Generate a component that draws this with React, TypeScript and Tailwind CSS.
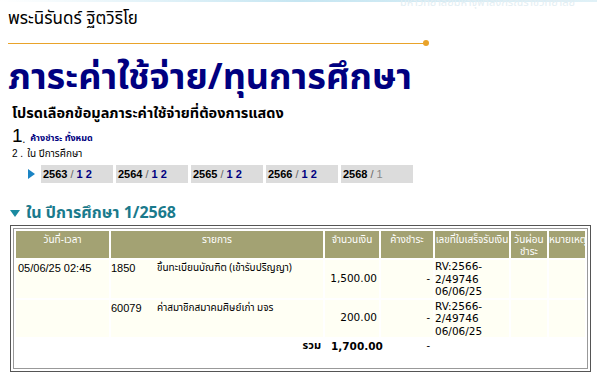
import React from "react";

const years = [
    { year: "2563", terms: "1 2", active: true },
    { year: "2564", terms: "1 2" },
    { year: "2565", terms: "1 2" },
    { year: "2566", terms: "1 2" },
    { year: "2568", terms: "1", muted: true },
];

const rows = [
    {
        date: "05/06/25 02:45",
        code: "1850",
        item: "ขึ้นทะเบียนบัณฑิต (เข้ารับปริญญา)",
        amount: "1,500.00",
        receipt: ["RV:2566-", "2/49746", "06/06/25"],
    },
    {
        date: "",
        code: "60079",
        item: "ค่าสมาชิกสมาคมศิษย์เก่า มจร",
        amount: "200.00",
        receipt: ["RV:2566-", "2/49746", "06/06/25"],
    },
];

const thai = "font-['Tahoma','Noto_Sans_Thai','Noto_Sans','DejaVu_Sans',sans-serif]";

export default function App() {
    return (
        <div className={`relative h-[373px] w-[597px] overflow-hidden bg-white ${thai}`}>
            {/* faded banner strip at the top */}
            <div className="h-[2px] w-full bg-gradient-to-r from-white via-[#c6e6f2] to-[#e0f1f7]" />
            <div className="absolute right-[22px] top-[-2px] text-[11px] leading-[9px] text-[#e3eef3]">มหาวิทยาลัยมหาจุฬาลงกรณราชวิทยาลัย</div>

            <div className="px-2 pt-[6px] text-[17px] leading-[22px] text-black">พระนิรันดร์ ฐิตวิริโย</div>

            <div className="mt-[10px] flex items-center pl-2">
                <div className="h-[1px] w-[416px] bg-[#e9a32a]" />
                <div className="-ml-[1px] h-[6px] w-[6px] rounded-full bg-[#e9a32a]" />
            </div>

            <h1 className="mt-[8px] pl-2 text-[36px] font-bold leading-[48px] text-[#000080]">ภาระค่าใช้จ่าย/ทุนการศึกษา</h1>

            <div className="mt-[2px] pl-3 text-[14.5px] font-bold leading-[20px] text-black">โปรดเลือกข้อมูลภาระค่าใช้จ่ายที่ต้องการแสดง</div>

            <div className="mt-[2px] flex items-end pl-3 leading-none">
                <span className="font-['Liberation_Sans',sans-serif] text-[19px]">1</span>
                <span className="mr-[5px] text-[10px]">.</span>
                <span className="mb-[2px] text-[9px] font-bold text-[#000080]">ค้างชำระ ทั้งหมด</span>
            </div>

            <div className="mt-[3px] flex items-center pl-3 text-[10px] leading-[12px]">
                <span className="font-['Liberation_Sans',sans-serif]">2 .</span>
                <span className="ml-[4px]">ใน ปีการศึกษา</span>
            </div>

            <div className="mt-[5px] flex items-center gap-[3px] pl-[28px]">
                <svg width="7" height="10" viewBox="0 0 7 10" className="mr-[3px]">
                    <path d="M0 0 L7 5 L0 10 Z" fill="#1b84c4" />
                </svg>
                {years.map((y) => (
                    <div
                        key={y.year}
                        className="flex h-[18px] w-[72px] items-center bg-[#dcdcdc] pl-[2px] font-['Liberation_Sans',sans-serif] text-[11px] font-bold"
                    >
                        <span className="text-black">{y.year}</span>
                        <span className="mx-[3px] font-normal text-[#666]">/</span>
                        <span className={y.muted ? "font-normal text-[#888]" : "text-[#000080]"}>{y.terms}</span>
                    </div>
                ))}
            </div>

            <div className="mt-[20px] flex items-center pl-[10px] text-[16px] font-bold leading-[20px] text-[#1a7a8c]">
                <svg width="10" height="7" viewBox="0 0 10 7" className="mr-[6px]">
                    <path d="M0 0 L10 0 L5 7 Z" fill="#1a8aa0" />
                </svg>
                ใน ปีการศึกษา 1/2568
            </div>

            <div className="ml-[10px] mt-[2px] w-[581px] border border-[#555] p-[2px]">
                <div className="border border-[#999] pb-[13px]">
                    <table className="w-full table-fixed border-separate border-spacing-[2px] text-[11px]">
                        <colgroup>
                            <col className="w-[93px]" />
                            <col className="w-[212px]" />
                            <col className="w-[54px]" />
                            <col className="w-[52px]" />
                            <col className="w-[74px]" />
                            <col className="w-[36px]" />
                            <col />
                        </colgroup>
                        <thead>
                            <tr className="bg-[#a3a273] align-top text-[10px] leading-[12px] text-white">
                                <th className="h-[24px] pt-[3px] font-normal">วันที่-เวลา</th>
                                <th className="pt-[3px] font-normal">รายการ</th>
                                <th className="pt-[3px] font-normal">จำนวนเงิน</th>
                                <th className="pt-[3px] font-normal">ค้างชำระ</th>
                                <th className="pt-[3px] font-normal">เลขที่ใบเสร็จรับเงิน</th>
                                <th className="pt-[3px] font-normal">วันผ่อนชำระ</th>
                                <th className="pt-[3px] text-left font-normal">หมายเหตุ</th>
                            </tr>
                        </thead>
                        <tbody>
                            {rows.map((r) => (
                                <tr key={r.code} className="bg-[#fffff4]">
                                    <td className="pl-[2px] pt-[2px] align-top font-['Liberation_Sans',sans-serif] leading-[13px]">{r.date}</td>
                                    <td className="pt-[2px] align-top leading-[13px]">
                                        <div className="flex">
                                            <span className="w-[46px] font-['Liberation_Sans',sans-serif]">{r.code}</span>
                                            <span className="text-[10px]">{r.item}</span>
                                        </div>
                                    </td>
                                    <td className="pr-[2px] text-right align-middle font-['DejaVu_Sans',sans-serif] text-[10.5px]">{r.amount}</td>
                                    <td className="pr-[3px] text-right align-middle">-</td>
                                    <td className="align-middle font-['DejaVu_Sans',sans-serif] text-[10.5px] leading-[12.5px]">
                                        {r.receipt.map((l) => (
                                            <div key={l}>{l}</div>
                                        ))}
                                    </td>
                                    <td />
                                    <td />
                                </tr>
                            ))}
                            <tr className="font-bold leading-[14px]">
                                <td />
                                <td className="pr-[2px] text-right text-[11px]">รวม</td>
                                <td className="pl-[6px] font-['DejaVu_Sans',sans-serif] text-[10.5px]">1,700.00</td>
                                <td className="pr-[3px] text-right font-normal">-</td>
                                <td />
                                <td />
                                <td />
                            </tr>
                        </tbody>
                    </table>
                </div>
            </div>
        </div>
    );
}
